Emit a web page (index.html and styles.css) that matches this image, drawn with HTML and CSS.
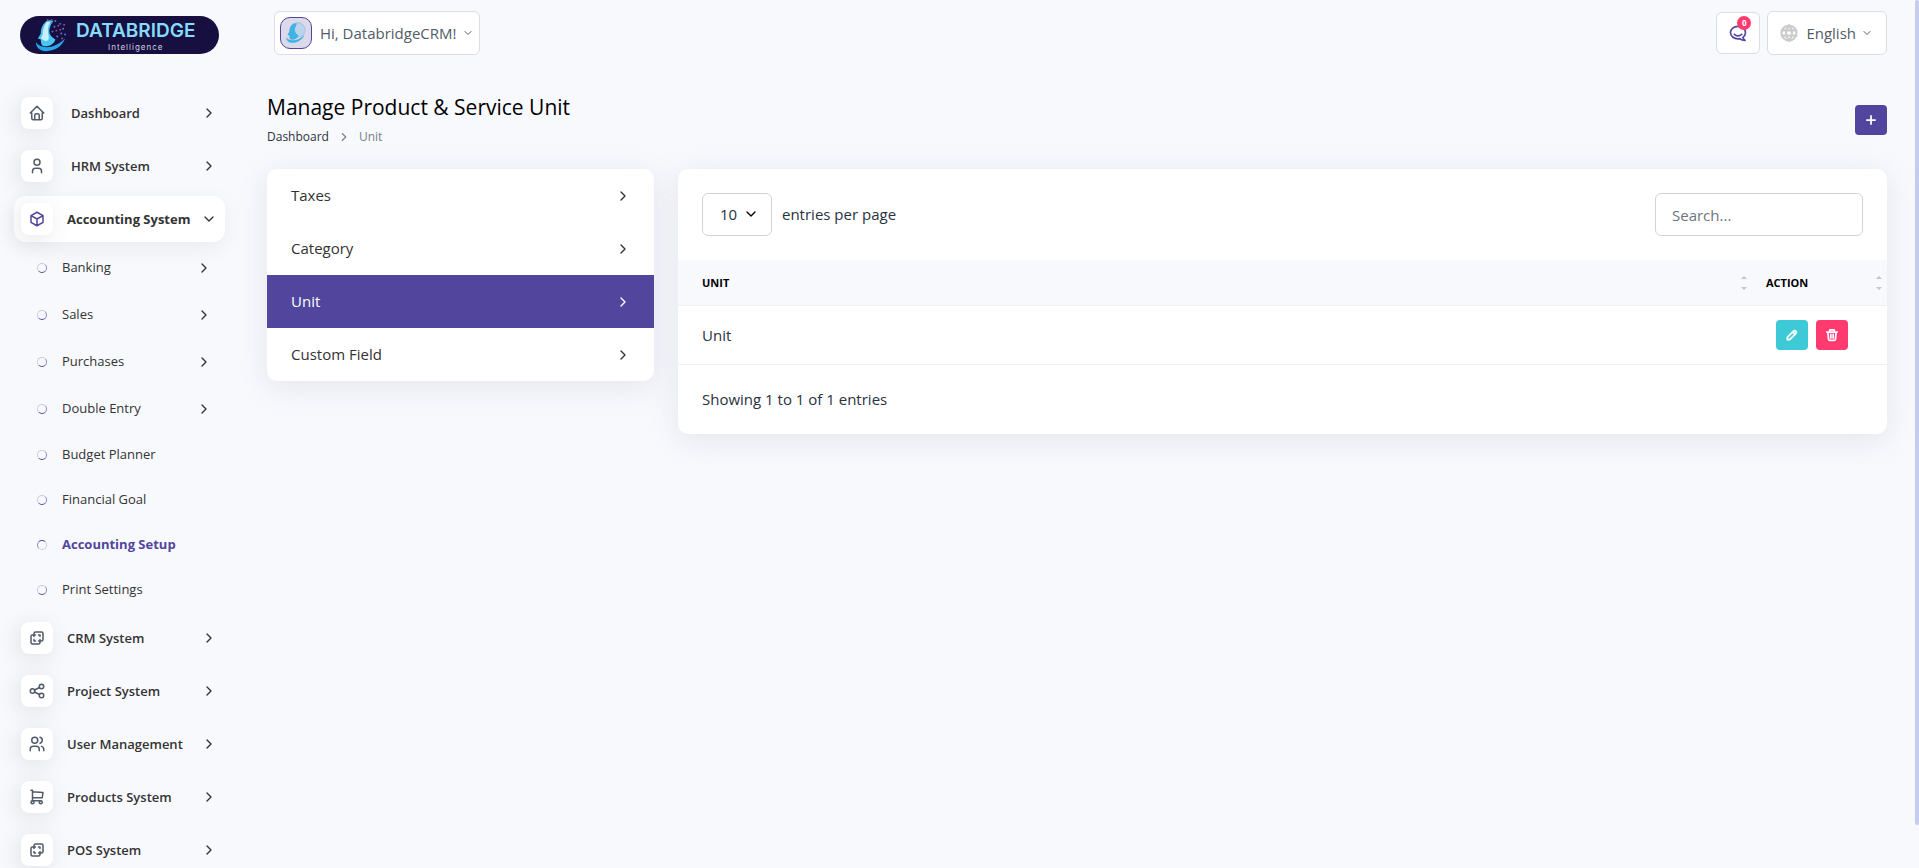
FILE: index.html
```html
<!DOCTYPE html>
<html lang="en">

<head>
    <meta charset="UTF-8">
    <meta name="viewport" content="width=device-width, initial-scale=1.0">
    <title>DatabridgeCRM - Manage Product &amp; Service Unit</title>
    <link rel="stylesheet" href="styles.css">
</head>

<body>
    <!-- icon sprite -->
    <svg class="sprite" aria-hidden="true">
        <symbol id="i-home" viewBox="0 0 24 24"><path d="M5 12H3l9-9 9 9h-2M5 12v7a2 2 0 0 0 2 2h10a2 2 0 0 0 2-2v-7M9 21v-6a2 2 0 0 1 2-2h2a2 2 0 0 1 2 2v6"/></symbol>
        <symbol id="i-user" viewBox="0 0 24 24"><circle cx="12" cy="7" r="4"/><path d="M6 21v-2a4 4 0 0 1 4-4h4a4 4 0 0 1 4 4v2"/></symbol>
        <symbol id="i-box" viewBox="0 0 24 24"><path d="M12 3l8 4.5v9L12 21l-8-4.5v-9L12 3M12 12l8-4.5M12 12v9M12 12L4 7.500"/></symbol>
        <symbol id="i-layers" viewBox="0 0 24 24"><path d="M16 16v2a2 2 0 0 1-2 2H6a2 2 0 0 1-2-2v-8a2 2 0 0 1 2-2h2V6a2 2 0 0 1 2-2h8a2 2 0 0 1 2 2v8a2 2 0 0 1-2 2h-2M10 8H8v2M8 14v2h2M14 8h2v2M16 14v2h-2"/></symbol>
        <symbol id="i-share" viewBox="0 0 24 24"><circle cx="6" cy="12" r="3"/><circle cx="18" cy="6" r="3"/><circle cx="18" cy="18" r="3"/><path d="M8.700 10.700l6.600-3.400M8.700 13.300l6.600 3.400"/></symbol>
        <symbol id="i-users" viewBox="0 0 24 24"><circle cx="9" cy="7" r="4"/><path d="M3 21v-2a4 4 0 0 1 4-4h4a4 4 0 0 1 4 4v2M16 3.130a4 4 0 0 1 0 7.750M21 21v-2a4 4 0 0 0-3-3.850"/></symbol>
        <symbol id="i-cart" viewBox="0 0 24 24"><circle cx="6" cy="19" r="2"/><circle cx="17" cy="19" r="2"/><path d="M17 17H6V3H4M6 5l14 1-1 7H6"/></symbol>
        <symbol id="i-right" viewBox="0 0 24 24"><path d="M9 6l6 6-6 6"/></symbol>
        <symbol id="i-down" viewBox="0 0 24 24"><path d="M6 9l6 6 6-6"/></symbol>
        <symbol id="i-chat" viewBox="0 0 24 24"><path d="M17.800 17.200c2-1.400 3.200-3.500 3.200-5.700C21 7.400 17 4 12 4s-9 3.400-9 7.500S7 19 12 19c.7 0 1.400-.1 2-.2 1 .8 3.300 2.200 6.500 2.200-1.500-1-2.400-2.700-2.700-3.800z"/><path d="M7.500 13.500c2.500 2.700 6.500 2.700 9 0"/></symbol>
        <symbol id="i-globe" viewBox="0 0 24 24"><circle cx="12" cy="12" r="10"/><path d="M2.500 8.500h19M2.500 15.500h19M12 2c-5.300 6-5.300 14 0 20M12 2c5.300 6 5.300 14 0 20"/></symbol>
        <symbol id="i-plus" viewBox="0 0 24 24"><path d="M12 5v14M5 12h14"/></symbol>
        <symbol id="i-pencil" viewBox="0 0 24 24"><path d="M4 20h4L18.500 9.500a2.800 2.800 0 0 0-4-4L4 16v4M13.500 6.500l4 4"/></symbol>
        <symbol id="i-trash" viewBox="0 0 24 24"><path d="M3 7h18M10 11v6M14 11v6M5 7l1 12a2 2 0 0 0 2 2h8a2 2 0 0 0 2-2l1-12M8 7V4a1 1 0 0 1 1-1h6a1 1 0 0 1 1 1v3"/></symbol>
        <symbol id="i-face" viewBox="0 0 34 36">
            <path d="M12 3C7 7 6 12 6 16l-3 5 3 1c0 5 1 7 5 7 5 0 9-3 10-7-5-3-7-6-6-11 1-4 2-6 4-8-3-1-5-1-7 0z" fill="#4bc5f2"/>
            <path d="M12 4c-3 4-4 9-4 13l-2 4 5 3c3-1 4-3 3-6-1-5-1-10 2-14z" fill="#c8f0fb"/>
            <path d="M1 25c0 8 8 11 17 8 7-2 11-7 13-12-6 6-13 9-19 9-5 0-9-2-11-5z" fill="#25a8e8"/>
            <g fill="#4f7fd6"><circle cx="17" cy="5" r="1"/><circle cx="21" cy="3" r="1"/><circle cx="26" cy="6" r="1"/><circle cx="20" cy="9" r="1"/><circle cx="29" cy="11" r="1"/><circle cx="18" cy="14" r="1"/><circle cx="27" cy="16" r="1"/><circle cx="23" cy="19" r="1"/><circle cx="31" cy="17" r="1"/></g>
            <g fill="#9c4a86"><circle cx="24" cy="8" r="1"/><circle cx="22" cy="13" r="1"/><circle cx="26" cy="12" r="1"/><circle cx="30" cy="7" r="1"/><circle cx="13" cy="2" r="1"/><circle cx="28" cy="21" r="1"/><circle cx="17" cy="2" r="1"/></g>
        </symbol>
        <symbol id="i-avatar" viewBox="0 0 34 36">
            <circle cx="20" cy="13" r="12" fill="#bcd3ee" stroke="#8fb4dd"/>
            <path d="M12 3C7 7 6 12 6 16l-3 5 3 1c0 5 1 7 5 7 5 0 9-3 10-7-5-3-7-6-6-11 1-4 2-6 4-8-3-1-5-1-7 0z" fill="#3fb4e4"/>
            <path d="M17 4c-3 5-3 11 1 16l3 2c-5-3-7-6-6-11z" fill="#2f6f9c"/>
            <path d="M1 25c0 8 8 11 17 8 7-2 11-7 13-12-6 6-13 9-19 9-5 0-9-2-11-5z" fill="#3fb4e4"/>
        </symbol>
    </svg>

    <div class="layout">
        <aside class="sidebar">
            <a class="logo" href="#">
                <svg class="logo-mark"><use href="#i-face"/></svg>
                <span class="logo-text">
                    <span class="logo-name">DATABRIDGE</span>
                    <span class="logo-tag">Intelligence</span>
                </span>
            </a>

            <nav>
                <ul class="menu">
                    <li><a class="menu-link wide" href="#"><span class="menu-icon"><svg class="icon"><use href="#i-home"/></svg></span>Dashboard<svg class="icon arrow"><use href="#i-right"/></svg></a></li>
                    <li><a class="menu-link wide" href="#"><span class="menu-icon"><svg class="icon"><use href="#i-user"/></svg></span>HRM System<svg class="icon arrow"><use href="#i-right"/></svg></a></li>
                    <li>
                        <a class="menu-link active" href="#"><span class="menu-icon"><svg class="icon"><use href="#i-box"/></svg></span>Accounting System<svg class="icon arrow"><use href="#i-down"/></svg></a>
                        <ul class="submenu">
                            <li><a class="sub-link has-arrow" href="#">Banking<svg class="icon arrow"><use href="#i-right"/></svg></a></li>
                            <li><a class="sub-link has-arrow" href="#">Sales<svg class="icon arrow"><use href="#i-right"/></svg></a></li>
                            <li><a class="sub-link has-arrow" href="#">Purchases<svg class="icon arrow"><use href="#i-right"/></svg></a></li>
                            <li><a class="sub-link has-arrow" href="#">Double Entry<svg class="icon arrow"><use href="#i-right"/></svg></a></li>
                            <li><a class="sub-link" href="#">Budget Planner</a></li>
                            <li><a class="sub-link" href="#">Financial Goal</a></li>
                            <li><a class="sub-link active" href="#">Accounting Setup</a></li>
                            <li><a class="sub-link" href="#">Print Settings</a></li>
                        </ul>
                    </li>
                    <li><a class="menu-link" href="#"><span class="menu-icon"><svg class="icon"><use href="#i-layers"/></svg></span>CRM System<svg class="icon arrow"><use href="#i-right"/></svg></a></li>
                    <li><a class="menu-link" href="#"><span class="menu-icon"><svg class="icon"><use href="#i-share"/></svg></span>Project System<svg class="icon arrow"><use href="#i-right"/></svg></a></li>
                    <li><a class="menu-link" href="#"><span class="menu-icon"><svg class="icon"><use href="#i-users"/></svg></span>User Management<svg class="icon arrow"><use href="#i-right"/></svg></a></li>
                    <li><a class="menu-link" href="#"><span class="menu-icon"><svg class="icon"><use href="#i-cart"/></svg></span>Products System<svg class="icon arrow"><use href="#i-right"/></svg></a></li>
                    <li><a class="menu-link" href="#"><span class="menu-icon"><svg class="icon"><use href="#i-layers"/></svg></span>POS System<svg class="icon arrow"><use href="#i-right"/></svg></a></li>
                </ul>
            </nav>
        </aside>

        <div class="main">
            <header class="topbar">
                <button class="top-btn user-btn" type="button">
                    <span class="avatar"><svg><use href="#i-avatar"/></svg></span>
                    Hi, DatabridgeCRM!
                    <svg class="icon caret"><use href="#i-down"/></svg>
                </button>
                <div class="top-right">
                    <button class="top-btn chat-btn" type="button" aria-label="Messages">
                        <svg class="icon"><use href="#i-chat"/></svg>
                        <span class="badge">0</span>
                    </button>
                    <button class="top-btn lang-btn" type="button">
                        <svg class="icon globe"><use href="#i-globe"/></svg>
                        English
                        <svg class="icon caret"><use href="#i-down"/></svg>
                    </button>
                </div>
            </header>

            <main class="content">
                <div class="page-header">
                    <div>
                        <h1>Manage Product &amp; Service Unit</h1>
                        <div class="breadcrumb">
                            <a href="#">Dashboard</a>
                            <svg class="icon"><use href="#i-right"/></svg>
                            <span>Unit</span>
                        </div>
                    </div>
                    <button class="btn btn-primary" type="button" aria-label="Create"><svg class="icon"><use href="#i-plus"/></svg></button>
                </div>

                <div class="row">
                    <nav class="card setup-nav">
                        <a href="#">Taxes<svg class="icon"><use href="#i-right"/></svg></a>
                        <a href="#">Category<svg class="icon"><use href="#i-right"/></svg></a>
                        <a class="active" href="#">Unit<svg class="icon"><use href="#i-right"/></svg></a>
                        <a href="#">Custom Field<svg class="icon"><use href="#i-right"/></svg></a>
                    </nav>

                    <section class="card">
                        <div class="table-top">
                            <div class="per-page">
                                <span class="select-wrap">
                                    <select id="perPage">
                                        <option>10</option>
                                        <option>25</option>
                                        <option>50</option>
                                    </select>
                                    <svg class="icon"><use href="#i-down"/></svg>
                                </span>
                                <label for="perPage">entries per page</label>
                            </div>
                            <input class="search" type="search" placeholder="Search..." aria-label="Search">
                        </div>
                        <table>
                            <thead>
                                <tr>
                                    <th><div class="th-inner">Unit<span class="sorter"></span></div></th>
                                    <th class="col-action"><div class="th-inner">Action<span class="sorter"></span></div></th>
                                </tr>
                            </thead>
                            <tbody>
                                <tr>
                                    <td>Unit</td>
                                    <td class="col-action">
                                        <div class="actions">
                                            <button class="btn btn-info" type="button" aria-label="Edit"><svg class="icon"><use href="#i-pencil"/></svg></button>
                                            <button class="btn btn-danger" type="button" aria-label="Delete"><svg class="icon"><use href="#i-trash"/></svg></button>
                                        </div>
                                    </td>
                                </tr>
                            </tbody>
                        </table>
                        <div class="table-info">Showing 1 to 1 of 1 entries</div>
                    </section>
                </div>
            </main>
        </div>
    </div>

    <div class="scroll-thumb"></div>
</body>

</html>
```
FILE: styles.css
```css
* {
    box-sizing: border-box;
}

body {
    margin: 0;
    background: #f8f9fd;
    color: #293240;
    font-family: "Open Sans", sans-serif;
    font-size: 15px;
    line-height: 23px;
}

a {
    color: inherit;
    text-decoration: none;
}

ul {
    list-style: none;
    margin: 0;
    padding: 0;
}

button,
input,
select {
    font: inherit;
    color: inherit;
}

button {
    cursor: pointer;
}

.sprite {
    display: none;
}

.icon {
    width: 16px;
    height: 16px;
    flex: none;
    fill: none;
    stroke: currentColor;
    stroke-width: 2;
    stroke-linecap: round;
    stroke-linejoin: round;
}

.layout {
    display: flex;
    height: 100vh;
    overflow: hidden;
}

/* sidebar */
.sidebar {
    width: 240px;
    flex: none;
    height: 100%;
    overflow: hidden;
    padding: 16px 15px 0 14px;
}

.logo {
    display: flex;
    align-items: center;
    height: 38px;
    margin: 0 6px 36px;
    padding: 0 15px;
    border-radius: 19px;
    background: #170f40;
}

.logo-mark {
    flex: none;
    width: 33px;
    height: 35px;
}

.logo-text {
    display: flex;
    flex-direction: column;
    align-items: center;
    margin-left: 8px;
}

.logo-name {
    color: #86dcf8;
    font: 600 19px/23px Inter, sans-serif;
}

.logo-tag {
    color: #d3d0e2;
    font: 8px/10px Inter, sans-serif;
    letter-spacing: 1px;
}

.menu {
    display: flex;
    flex-direction: column;
    gap: 7px;
}

.menu-link {
    display: flex;
    align-items: center;
    height: 46px;
    padding: 0 8px 0 7px;
    border-radius: 12px;
    color: #333;
    font-size: 13px;
    font-weight: 600;
}

.menu-link .arrow,
.sub-link .arrow {
    margin-left: auto;
}

.menu-link.active {
    background: #fff;
    font-weight: 700;
    box-shadow: 0 6px 24px rgba(0, 0, 0, 0.06);
}

.menu-icon {
    display: flex;
    align-items: center;
    justify-content: center;
    width: 32px;
    height: 32px;
    margin-right: 14px;
    border-radius: 8px;
    background: #fff;
    color: #525b69;
    box-shadow: -3px 4px 23px rgba(0, 0, 0, 0.1);
}

.menu-icon .icon {
    width: 18px;
    height: 18px;
}

.wide .menu-icon {
    margin-right: 18px;
}

.active .menu-icon {
    color: #51459d;
}

.submenu {
    margin: 2px 0 -4px;
}

.sub-link {
    display: flex;
    align-items: center;
    height: 45px;
    padding: 0 13px 0 23px;
    color: #333;
    font-size: 13px;
    font-weight: 500;
}

.sub-link.has-arrow {
    height: 47px;
}

.sub-link::before {
    content: "";
    width: 8px;
    height: 8px;
    margin-right: 15px;
    border: 1px solid #cdcce0;
    border-right-color: #8f87c4;
    border-bottom-color: #51459d;
    border-radius: 50%;
}

.sub-link.active {
    color: #51459d;
    font-weight: 700;
}

.sub-link.active::before {
    border-color: #51459d #cdcce0 #cdcce0 #8f87c4;
}

/* main area */
.main {
    flex: 1;
    min-width: 0;
    padding: 0 32px 0 27px;
}

.topbar {
    display: flex;
    align-items: center;
    justify-content: space-between;
    height: 66px;
    padding-left: 7px;
}

.top-right {
    display: flex;
    align-items: center;
    gap: 7px;
}

.top-btn {
    display: flex;
    align-items: center;
    height: 44px;
    border: 1px solid #dcdde3;
    border-radius: 6px;
    background: #fff;
    color: #525b69;
}

.top-btn .caret {
    width: 12px;
    height: 12px;
    margin-left: 5px;
}

.user-btn {
    padding: 0 5px;
}

.avatar {
    display: flex;
    align-items: center;
    justify-content: center;
    width: 32px;
    height: 32px;
    margin-right: 8px;
    border: 1px solid #51459d;
    border-radius: 10px;
    background: #dcd9eb;
}

.avatar svg {
    width: 22px;
    height: 22px;
}

.chat-btn {
    position: relative;
    justify-content: center;
    width: 44px;
    height: 42px;
    padding: 0;
    color: #51459d;
}

.chat-btn .icon {
    width: 20px;
    height: 20px;
}

.badge {
    position: absolute;
    top: 3px;
    right: 8px;
    width: 14px;
    height: 14px;
    border-radius: 50%;
    background: #ff3a6e;
    color: #fff;
    font-size: 8px;
    font-weight: 700;
    line-height: 14px;
}

.lang-btn {
    padding: 0 13px 0 12px;
}

.top-btn .globe {
    width: 18px;
    height: 18px;
    margin-right: 8px;
    color: #ccc;
    stroke-width: 3;
}

.page-header {
    display: flex;
    align-items: center;
    justify-content: space-between;
    padding: 27px 0 22px;
}

h1 {
    margin: 0 0 6px;
    color: #000;
    font-size: 21px;
    font-weight: 500;
    line-height: 28px;
}

.breadcrumb {
    display: flex;
    align-items: center;
    gap: 8px;
    color: #7a808c;
    font-size: 12px;
    line-height: 20px;
}

.breadcrumb a {
    color: #293240;
}

.breadcrumb .icon {
    width: 14px;
    height: 14px;
}

.btn {
    display: flex;
    align-items: center;
    justify-content: center;
    width: 32px;
    height: 30px;
    padding: 0;
    border: none;
    border-radius: 4px;
    color: #fff;
}

.btn .icon {
    width: 14px;
    height: 14px;
    stroke-width: 3;
}

.btn-primary {
    background: #51459d;
}

.btn-info {
    background: #3ec9d6;
}

.btn-danger {
    background: #ff3a6e;
}

.row {
    display: grid;
    grid-template-columns: repeat(12, 1fr);
    gap: 24px;
    align-items: start;
}

.card {
    grid-column: span 9;
    overflow: hidden;
    border-radius: 10px;
    background: #fff;
    box-shadow: 0 6px 30px rgba(182, 186, 203, 0.3);
}

.setup-nav {
    grid-column: span 3;
}

.setup-nav a {
    display: flex;
    align-items: center;
    justify-content: space-between;
    padding: 15px 23px 15px 24px;
    color: #333;
}

.setup-nav a.active {
    background: #51459d;
    color: #fff;
}

.table-top {
    display: flex;
    align-items: center;
    justify-content: space-between;
    padding: 24px;
}

.per-page {
    display: flex;
    align-items: center;
    gap: 10px;
}

.select-wrap {
    position: relative;
}

.select-wrap .icon {
    position: absolute;
    top: 13px;
    right: 13px;
    color: #000;
    pointer-events: none;
}

select,
.search {
    display: block;
    height: 43px;
    border: 1px solid #ced4da;
    border-radius: 6px;
    background: #fff;
    appearance: none;
}

select {
    width: 70px;
    padding: 0 17px;
}

.search {
    width: 208px;
    padding: 0 16px;
}

.search::placeholder {
    color: #6c757d;
}

table {
    width: 100%;
    border-collapse: separate;
    border-spacing: 0;
}

th,
td {
    padding: 0 24px;
    border-bottom: 1px solid #f1f1f4;
    text-align: left;
}

th {
    height: 46px;
    padding-right: 5px;
    background: #f8f9fd;
    color: #000;
    font-size: 11px;
    font-weight: 700;
    text-transform: uppercase;
}

td {
    height: 59px;
}

.col-action {
    width: 135px;
    padding-left: 14px;
}

.th-inner {
    display: flex;
    align-items: center;
    justify-content: space-between;
}

.sorter::before,
.sorter::after {
    content: "";
    display: block;
    border: 3px solid transparent;
}

.sorter::before {
    border-top: 0;
    border-bottom-color: #c4c6cc;
}

.sorter::after {
    margin-top: 8px;
    border-bottom: 0;
    border-top-color: #c4c6cc;
}

.actions {
    display: flex;
    gap: 8px;
    margin-left: 10px;
}

.table-info {
    padding: 23px 24px;
}

/* page scroll indicator */
.scroll-thumb {
    position: fixed;
    top: 0;
    right: 0;
    width: 4px;
    height: 95vh;
    border-radius: 2px;
    background: #c5cdee;
}
```
